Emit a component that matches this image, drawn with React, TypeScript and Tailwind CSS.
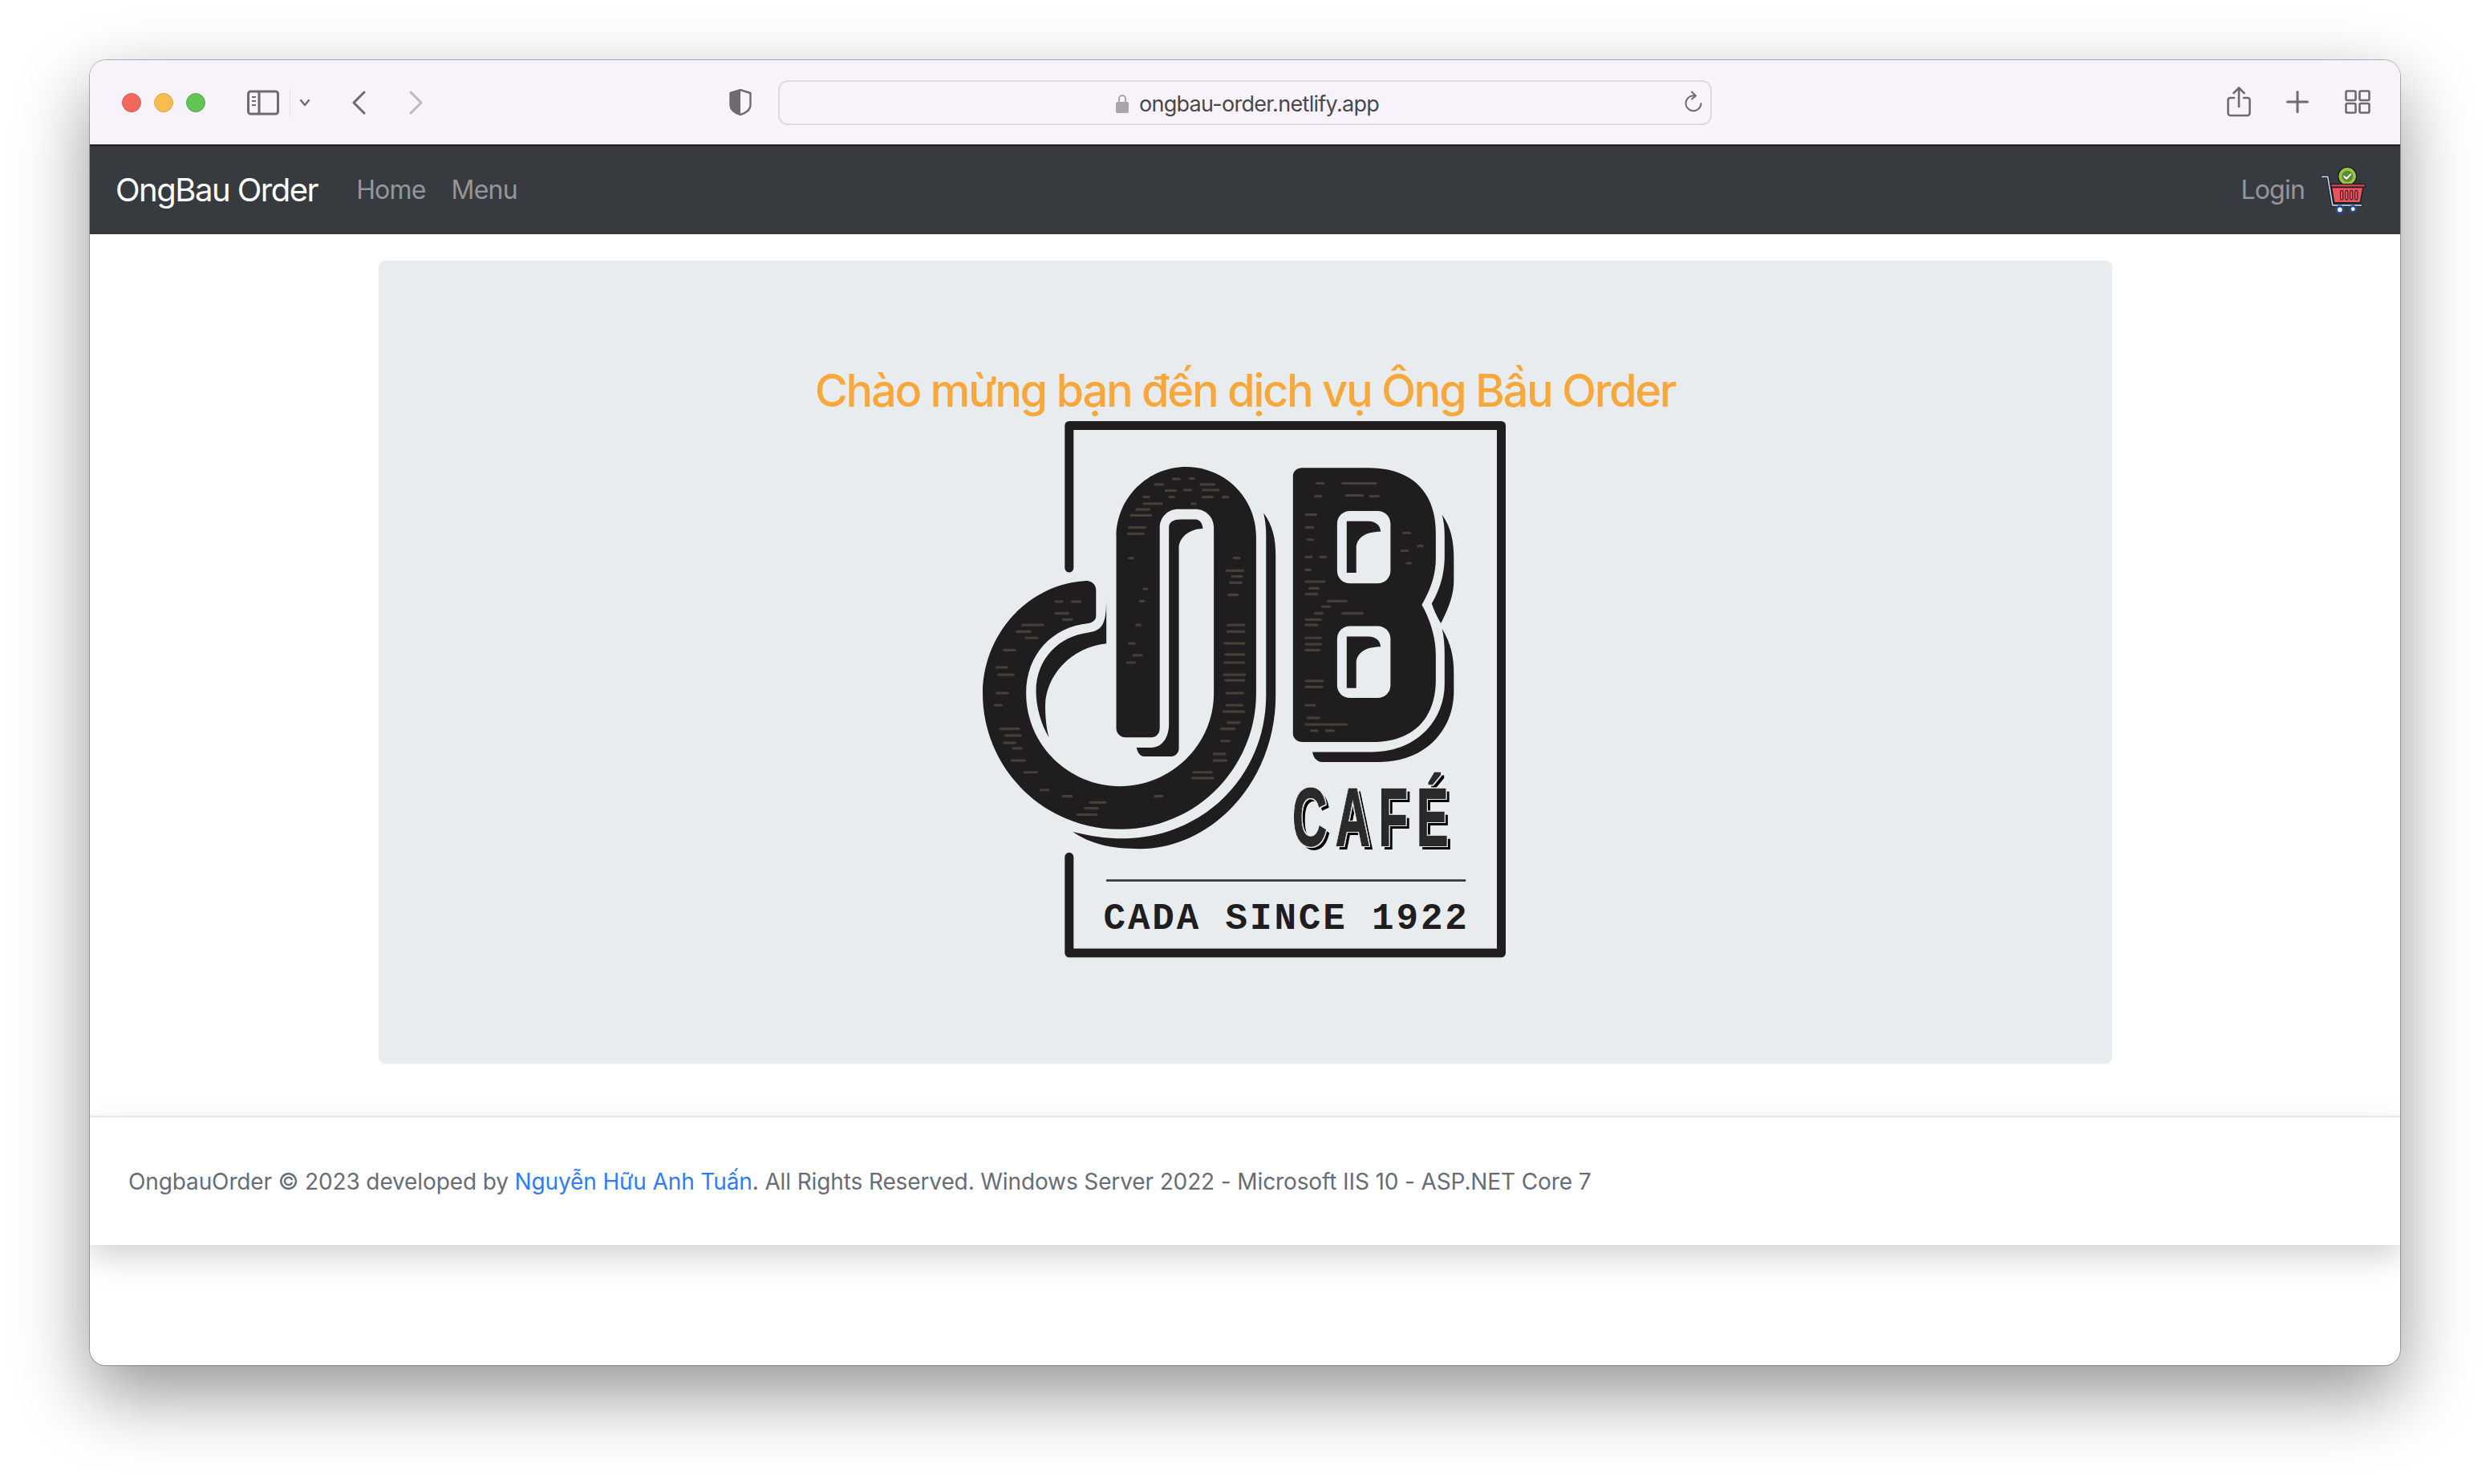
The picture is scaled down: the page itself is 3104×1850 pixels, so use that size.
const ink = "#1f1d1d";

// worn print marks on the logo: [x, y, width]
const grain: number[][] = [
  [520, 228, 22], [570, 213, 16], [615, 212, 10], [645, 228, 36], [550, 245, 26], [600, 243, 18], [650, 243, 42], [490, 262, 14], [560, 262, 12], [650, 262, 26], [705, 262, 14],
  [490, 280, 48], [620, 280, 10], [470, 296, 34], [455, 312, 54], [450, 345, 44], [448, 362, 40], [450, 428, 10], [490, 512, 8], [480, 545, 10], [470, 610, 10], [450, 660, 14], [462, 692, 22], [445, 712, 20],
  [735, 428, 14], [715, 462, 44], [730, 478, 26], [725, 495, 30], [720, 528, 24], [718, 610, 44], [718, 628, 44], [710, 660, 52], [712, 690, 50], [710, 712, 52], [708, 745, 56], [712, 760, 50], [715, 795, 44], [715, 828, 42], [706, 845, 56], [718, 875, 32], [700, 892, 36], [700, 925, 22],
  [680, 960, 30], [680, 978, 34], [625, 1010, 48], [622, 1026, 56], [520, 1075, 20], [345, 1092, 40], [330, 1108, 34], [310, 1125, 50], [270, 1075, 24], [210, 1058, 20], [165, 1010, 34], [130, 978, 36], [100, 892, 50], [115, 910, 40], [110, 930, 30], [135, 945, 22],
  [90, 725, 28], [95, 745, 40], [90, 795, 30], [85, 828, 18], [110, 678, 30], [145, 628, 36], [160, 610, 56], [170, 645, 30], [250, 578, 34], [270, 595, 24], [250, 546, 18], [295, 546, 22],
  [1030, 225, 90], [960, 225, 18], [1040, 258, 44], [955, 260, 16], [1105, 260, 22], [930, 310, 28], [930, 345, 20], [935, 378, 14], [930, 425, 16], [970, 425, 14], [930, 460, 12], [930, 492, 50], [940, 510, 24], [930, 526, 30], [990, 545, 50], [975, 560, 20], [1030, 578, 54], [955, 578, 20],
  [930, 595, 40], [930, 610, 30], [930, 645, 40], [930, 662, 40], [930, 678, 36], [930, 762, 46], [930, 778, 44], [930, 828, 24], [935, 862, 30], [930, 880, 110], [945, 897, 16], [985, 897, 20], [1195, 360, 18], [1190, 408, 16], [1235, 395, 12], [1205, 442, 10],
];

function LogoMark() {
  return (
    <svg viewBox="52 57 1421 1456" className="block h-[669px] w-[652px]" fill={ink}>
      <defs>
        <filter id="cafe-inline" x="-5%" y="-5%" width="115%" height="115%">
          <feOffset in="SourceAlpha" dx="9" dy="8" result="drop" />
          <feMorphology in="SourceAlpha" operator="dilate" radius="3" result="fat" />
          <feFlood floodColor="#e9ecef" />
          <feComposite in2="fat" operator="in" result="gap" />
          <feMerge>
            <feMergeNode in="drop" />
            <feMergeNode in="gap" />
            <feMergeNode in="SourceGraphic" />
          </feMerge>
        </filter>
        <filter id="worn">
          <feGaussianBlur stdDeviation="1" />
        </filter>
      </defs>

      <path d="M287 455V68H1461V1501H287V1240" fill="none" stroke={ink} strokeWidth="24" strokeLinecap="round" strokeLinejoin="round" />

      {/* J */}
      <path d="M330 490C170 500 52 640 52 795C52 1000 218 1165 424 1165C630 1165 795 1000 795 795V370C795 265 710 180 605 180C500 180 415 265 415 370V890C415 905 427 915 440 915H510C523 915 533 905 533 890V345C533 317 555 295 583 295H630C658 295 680 317 680 345V795C680 935 565 1048 425 1048C285 1048 170 935 170 795C170 690 240 615 340 605C352 603 360 595 360 585V515C360 500 347 488 330 490Z" />
      <path d="M815 305C840 340 848 375 848 420V800C848 1040 670 1218 480 1218C400 1218 345 1205 297 1172C350 1185 390 1190 430 1190C650 1190 822 1020 822 800V370C822 345 820 325 815 305Z" />
      <path d="M558 345C558 330 570 323 590 323H630C642 323 650 335 650 348C615 348 585 372 585 400V945C585 958 575 967 563 967H490C480 967 472 955 470 943H510C540 943 558 915 558 880Z" />
      <path d="M388 540V660C290 670 222 750 222 830C222 860 225 890 232 915C210 880 197 830 197 790C197 700 260 640 340 630C375 625 388 610 388 540Z" />

      {/* B */}
      <path fillRule="evenodd" d="M895 205C895 192 907 183 920 183H1100C1225 183 1283 255 1283 360V430C1283 480 1265 520 1245 555C1265 590 1283 640 1283 690V760C1283 860 1225 928 1110 928H920C907 928 895 918 895 905ZM1050 300C1030 300 1015 315 1015 335V462C1015 482 1030 497 1050 497H1125C1145 497 1160 482 1160 462V335C1160 315 1145 300 1125 300ZM1050 613C1030 613 1015 628 1015 648V773C1015 793 1030 808 1050 808H1125C1145 808 1160 793 1160 773V648C1160 628 1145 613 1125 613Z" />
      <path d="M1041 328H1100C1120 328 1133 340 1133 356C1090 356 1067 375 1067 400V468H1041Z" />
      <path d="M1041 641H1100C1120 641 1133 653 1133 669C1090 669 1067 688 1067 713V781H1041Z" />
      <path d="M1300 310C1325 345 1332 385 1332 430V490C1332 530 1315 570 1297 605C1285 585 1278 570 1272 552C1290 520 1307 480 1307 420V370C1307 345 1305 330 1300 310Z" />
      <path d="M1300 620C1325 660 1332 700 1332 740V790C1332 900 1250 982 1130 982H975C960 982 950 970 948 955H1110C1230 955 1307 870 1307 770V690C1307 665 1305 640 1300 620Z" />

      <g stroke="#4b483f" strokeWidth="7" strokeLinecap="round" opacity="0.8" filter="url(#worn)">
        {grain.map(([x, y, w]) => (
          <line key={`${x}-${y}`} x1={x} y1={y} x2={x + w} y2={y} />
        ))}
      </g>

      <text x="893" y="1208" fontFamily="'Liberation Sans', sans-serif" fontWeight="700" fontSize="222" letterSpacing="40" textLength="448" lengthAdjust="spacingAndGlyphs" stroke="#2b2929" strokeWidth="4" filter="url(#cafe-inline)" fill="#2b2929">
        CAFÉ
      </text>
      <line x1="390" y1="1304" x2="1362" y2="1304" stroke="#3a3838" strokeWidth="6" strokeLinecap="round" />
      <text x="380" y="1436" fontFamily="'Liberation Mono', monospace" fontWeight="700" fontSize="100" textLength="988" fill={ink}>
        CADA SINCE 1922
      </text>
    </svg>
  );
}

function CartIcon() {
  return (
    <svg viewBox="100 45 170 185" className="h-[62px] w-[57px]">
      <path d="M105 88H126L144 194H250" fill="none" stroke="#14181f" strokeWidth="10" strokeLinejoin="round" strokeLinecap="round" />
      <path d="M105 88H126L144 194H250" fill="none" stroke="#bcd8ef" strokeWidth="5" strokeLinejoin="round" strokeLinecap="round" />
      <circle cx="199" cy="86" r="34" fill="#9ac63f" stroke="#14181f" strokeWidth="4" />
      <circle cx="199" cy="86" r="21" fill="#5b8a3a" />
      <path d="M187 87l9 8 15-16" fill="none" stroke="#fff" strokeWidth="6" strokeLinecap="round" strokeLinejoin="round" />
      <path d="M140 127H258L247 184H150Z" fill="#e8535d" stroke="#14181f" strokeWidth="4" strokeLinejoin="round" />
      <rect x="138" y="115" width="127" height="11" fill="#c8454f" stroke="#14181f" strokeWidth="3" />
      {[178, 196, 214, 232].map((x) => (
        <rect key={x} x={x - 5} y="139" width="10" height="34" rx="5" fill="#e8535d" stroke="#14181f" strokeWidth="3" />
      ))}
      <circle cx="171" cy="210" r="13" fill="#fff" stroke="#27498c" strokeWidth="9" />
      <circle cx="220" cy="208" r="11" fill="#fff" stroke="#27498c" strokeWidth="8" />
    </svg>
  );
}

function Toolbar() {
  const icon = "#6f6a72";
  return (
    <div className="flex h-[105px] items-center bg-[#f8f3fa] pl-[40px]">
      <div className="flex gap-[16px]">
        <span className="h-[24px] w-[24px] rounded-full border border-[#dc574c] bg-[#ee6a5f]" />
        <span className="h-[24px] w-[24px] rounded-full border border-[#dca43c] bg-[#f5bd4f]" />
        <span className="h-[24px] w-[24px] rounded-full border border-[#52ab45] bg-[#61c454]" />
      </div>

      <svg viewBox="0 0 40 32" className="ml-[52px] h-[32px] w-[40px]" fill="none" stroke={icon} strokeWidth="3">
        <rect x="1.5" y="2" width="37" height="28" rx="3" />
        <path d="M15 2V30" />
        <path d="M6 9h5M6 14h5M6 19h5" strokeWidth="2" />
      </svg>
      <span className="ml-[13px] h-[36px] w-px bg-[#e6e1e8]" />
      <svg viewBox="0 0 14 10" className="ml-[11px] h-[10px] w-[14px]" fill="none" stroke={icon} strokeWidth="2.4" strokeLinecap="round" strokeLinejoin="round">
        <path d="M2 2l5 6 5-6" />
      </svg>
      <svg viewBox="0 0 18 30" className="ml-[51px] h-[30px] w-[18px]" fill="none" stroke={icon} strokeWidth="3" strokeLinecap="round" strokeLinejoin="round">
        <path d="M16 2L3 15l13 13" />
      </svg>
      <svg viewBox="0 0 18 30" className="ml-[54px] h-[30px] w-[18px]" fill="none" stroke="#bdb9c0" strokeWidth="3" strokeLinecap="round" strokeLinejoin="round">
        <path d="M2 2l13 13L2 28" />
      </svg>

      <svg viewBox="0 0 28 33" className="ml-[381px] h-[33px] w-[28px]">
        <path d="M14 1L26.5 5V20C26.5 26 20 30 14 32C8 30 1.5 26 1.5 20V5Z" fill="none" stroke={icon} strokeWidth="2.4" strokeLinejoin="round" />
        <path d="M14 1L1.5 5V20C1.5 26 8 30 14 32Z" fill={icon} />
      </svg>

      <div className="relative ml-[33px] flex h-[56px] w-[1164px] items-center justify-center gap-[13px] rounded-[12px] border-2 border-[#dfdae2] pl-[6px]">
        <svg viewBox="0 0 16 24" className="mt-[2px] h-[24px] w-[16px]">
          <path d="M4 11V6a4 4 0 0 1 8 0v5" fill="none" stroke="#a9a5ac" strokeWidth="2" />
          <rect y="10" width="16" height="14" rx="2" fill="#a9a5ac" />
        </svg>
        <span className="mt-[3px] text-[27px] leading-none tracking-[-0.7px] text-[#4a474d]">ongbau-order.netlify.app</span>
        <svg viewBox="0 0 22 28" className="absolute right-[10px] top-[11px] h-[28px] w-[22px]" fill="none" stroke={icon} strokeWidth="2" strokeLinecap="round" strokeLinejoin="round">
          <path d="M13 6.5A9.5 9.5 0 1 0 20.5 16" />
          <path d="M9 1.5l5 5-5 4" />
        </svg>
      </div>

      <svg viewBox="0 0 30 38" className="ml-[642px] mb-[2px] h-[38px] w-[30px]" fill="none" stroke={icon} strokeWidth="2.6" strokeLinecap="round" strokeLinejoin="round">
        <path d="M9 14H4a2.500 2.500 0 0 0-2.500 2.500V33A3 3 0 0 0 4.500 36h21a3 3 0 0 0 3-3V16.500A2.500 2.500 0 0 0 26 14h-5" />
        <path d="M15 25V2M8.500 8L15 1.500 21.500 8" />
      </svg>
      <svg viewBox="0 0 28 28" className="ml-[44px] mb-[2px] h-[28px] w-[28px]" fill="none" stroke={icon} strokeWidth="3" strokeLinecap="round">
        <path d="M14 1.500V26.500M1.500 14H26.500" />
      </svg>
      <svg viewBox="0 0 32 30" className="ml-[45px] mb-[2px] h-[30px] w-[32px]" fill="none" stroke={icon} strokeWidth="2.600">
        <rect x="1.500" y="1.500" width="12" height="11.500" rx="1.500" />
        <rect x="18.500" y="1.500" width="12" height="11.500" rx="1.500" />
        <rect x="1.500" y="17" width="12" height="11.500" rx="1.500" />
        <rect x="18.500" y="17" width="12" height="11.500" rx="1.500" />
      </svg>
    </div>
  );
}

export default function App() {
  return (
    <div className="h-[1850px] bg-white px-[112px] pt-[75px] font-['Inter',sans-serif]">
      <div className="h-[1627px] w-[2880px] overflow-hidden rounded-[20px] bg-white shadow-[0_0_0_1px_rgba(0,0,0,0.28),0_36px_90px_rgba(0,0,0,0.42)]">
        <Toolbar />

        <nav className="flex h-[112px] items-center justify-between border-t-2 border-[#1d1f21] bg-[#373b3f] pl-[32px] pr-[42px]">
          <div className="flex items-center">
            <a className="text-[40px] leading-none tracking-[-1.5px] text-white">OngBau Order</a>
            <a className="ml-[48px] text-[32px] leading-none tracking-[-0.8px] text-[#93969a]">Home</a>
            <a className="ml-[32px] text-[32px] leading-none tracking-[-0.8px] text-[#93969a]">Menu</a>
          </div>
          <div className="flex items-center gap-[20px]">
            <a className="text-[32px] leading-none tracking-[-0.8px] text-[#93969a]">Login</a>
            <CartIcon />
          </div>
        </nav>

        <main className="h-[1099px] pt-[33px]">
          <section className="mx-auto h-[1001px] w-[2161px] rounded-[8px] bg-[#e9ecef] pt-[124px]">
            <h1 className="text-center text-[56px] font-medium leading-[76px] tracking-[-2.3px] text-[#f8a83a]">
              Chào mừng bạn đến dịch vụ Ông Bầu Order
            </h1>
            <div className="flex justify-center pr-[3px]">
              <LogoMark />
            </div>
          </section>
        </main>

        <footer className="flex h-[161px] items-center border-t-2 border-[#e7e8ec] bg-white pl-[48px] text-[28px] tracking-[-0.12px] text-[#666c78] shadow-[0_16px_36px_rgba(0,0,0,0.17)]">
          <p>
            OngbauOrder © 2023 developed by <a className="text-[#2b7cff]">Nguyễn Hữu Anh Tuấn</a>. All Rights Reserved. Windows Server 2022 - Microsoft IIS 10 - ASP.NET Core 7
          </p>
        </footer>
      </div>
    </div>
  );
}
